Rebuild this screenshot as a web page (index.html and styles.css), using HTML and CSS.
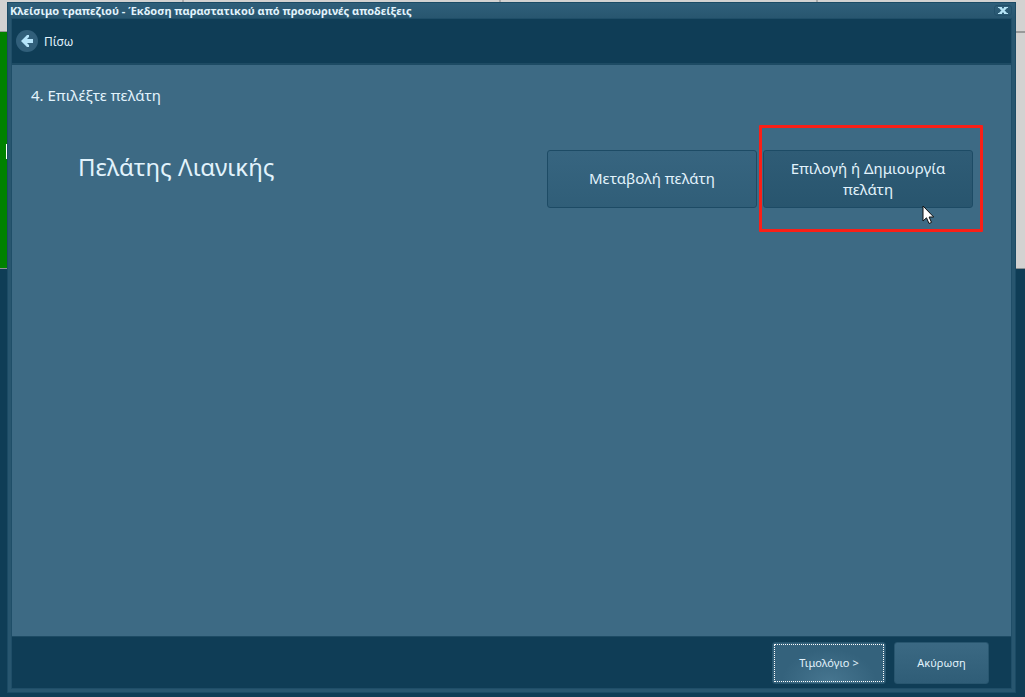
FILE: index.html
```html
<!DOCTYPE html>
<html lang="el">
<head>
<meta charset="utf-8">
<title>Κλείσιμο τραπεζιού</title>
<link rel="stylesheet" href="styles.css">
</head>
<body>
<div class="desktop" aria-hidden="true">
  <div class="desktop-grid"><span></span><span></span><span></span><span></span></div>
  <div class="desktop-table"><i></i></div>
</div>
<main class="window">
  <header class="titlebar">
    <h1>Κλείσιμο τραπεζιού - Έκδοση παραστατικού από προσωρινές αποδείξεις</h1>
    <button class="close" aria-label="Κλείσιμο">
      <svg width="10" height="7" viewBox="0 0 10 7"><path d="M0 .5h4M6 .5h4M0 6.500h4M6 6.500h4" stroke="#b5e4f6"/><path d="M2 .5l6 6M8 .5l-6 6" stroke="#b5e4f6" stroke-width="2.400"/></svg>
    </button>
  </header>
  <div class="frame">
    <nav class="toolbar">
      <button class="back">
        <svg width="24" height="24" viewBox="0 0 24 24"><circle cx="12" cy="12" r="11" fill="#315f7a"/><path d="M6 12l6-6h2v2l-2 2h6v4h-6l2 2v2h-2z" fill="#b5e4fa"/></svg>
        <span>Πίσω</span>
      </button>
    </nav>
    <section class="content">
      <h2>4. Επιλέξτε πελάτη</h2>
      <div class="customer">
        <p class="customer-name">Πελάτης Λιανικής</p>
        <div class="choices">
          <button class="choice">Μεταβολή πελάτη</button>
          <div class="highlighted">
            <button class="choice active">Επιλογή ή Δημιουργία πελάτη</button>
            <svg class="cursor" width="13" height="20" viewBox="0 0 13 20"><path d="M1 1v15l3.500-3.200L7 18.500l2.500-1.100-2.400-5.400h4.600z" fill="#fff" stroke="#111" stroke-width="1"/></svg>
          </div>
        </div>
      </div>
    </section>
    <footer class="actions">
      <button class="action focused">Τιμολόγιο &gt;</button>
      <button class="action">Ακύρωση</button>
    </footer>
  </div>
</main>
</body>
</html>
```
FILE: styles.css
```css
* { box-sizing: border-box; }
body {
  margin: 0;
  height: 100vh;
  display: flex;
  position: relative;
  overflow: hidden;
  background: #0f3d56;
  color: #e2f3fc;
  font-family: "Noto Sans", "Open Sans", sans-serif;
}
h1, h2, p { margin: 0; font-weight: 400; }
button {
  font: inherit;
  color: inherit;
  border: 0;
  padding: 0;
  background: none;
}
svg { display: block; }

.desktop {
  position: absolute;
  inset: 0 0 auto 0;
  height: 269px;
  background: #d3d2d1;
  border-bottom: 1px solid #8b9193;
}
.desktop-grid {
  display: grid;
  grid-template-columns: 184px 317px 317px 1fr;
  height: 33px;
  border-bottom: 2px solid #999;
}
.desktop-grid span { border-right: 2px solid #aaa; }
.desktop-grid span:last-child { border: 0; }
.desktop-table {
  position: absolute;
  top: 32px;
  left: 0;
  bottom: 0;
  width: 7px;
  padding-top: 112px;
  background: #008200;
}
.desktop-table i {
  display: block;
  width: 1px;
  height: 15px;
  margin-left: 6px;
  background: #fff;
}

.window {
  position: relative;
  flex: 1;
  display: flex;
  flex-direction: column;
  margin: 2px 9px 4px 7px;
  border: 1px solid #1b4b65;
  background: #28566f;
}
.titlebar {
  display: flex;
  align-items: center;
  justify-content: space-between;
  height: 15px;
  padding: 0 3px 0 2px;
  background: linear-gradient(#2f5f7a, #28566f);
}
.titlebar h1 {
  font-size: 11px;
  line-height: 15px;
  font-weight: 700;
  white-space: nowrap;
}
.close {
  display: grid;
  place-items: center;
  width: 18px;
  height: 11px;
  border: 1px solid #22516b;
  border-radius: 3px;
}
.frame {
  flex: 1;
  display: flex;
  flex-direction: column;
  margin: 0 3px 3px;
  border: 1px solid #1f4e68;
}
.toolbar {
  display: flex;
  align-items: center;
  height: 46px;
  padding: 0 3px;
  background: #0f3d56;
  border-bottom: 2px solid #1d4b64;
}
.back {
  display: flex;
  align-items: center;
  gap: 5px;
  font-size: 12px;
}
.content {
  flex: 1;
  padding: 18px 28px 0 19px;
  background: #3d6a84;
}
.content h2 { font-size: 15px; line-height: 24px; }
.customer {
  display: flex;
  justify-content: space-between;
  padding: 18px 0 0 47px;
}
.customer-name {
  padding-top: 26px;
  font-size: 24px;
  line-height: 32px;
}
.choices { display: flex; align-items: center; gap: 2px; }
.choice {
  width: 210px;
  height: 58px;
  padding: 0 16px;
  border: 1px solid #1d4b65;
  border-radius: 3px;
  background: linear-gradient(#376580, #305e78);
  font-size: 15px;
  line-height: 21px;
}
.choice.active { background: linear-gradient(#2f5c76, #28556e); }
.highlighted {
  position: relative;
  padding: 22px 7px 21px 1px;
  border: 3px solid #fa1f17;
  border-radius: 1px;
}
.cursor { position: absolute; right: 45px; bottom: 4px; }
.actions {
  display: flex;
  justify-content: flex-end;
  align-items: center;
  gap: 8px;
  height: 52px;
  padding: 0 22px;
  background: #0f3d56;
  border-top: 1px solid #1d4b64;
}
.action {
  width: 95px;
  height: 42px;
  border: 1px solid #28566f;
  border-radius: 3px;
  background: linear-gradient(#3b6983, #2f5d77);
  font-size: 11px;
}
.action.focused {
  width: 114px;
  outline: 1px dotted #fff;
  outline-offset: -3px;
  background: radial-gradient(ellipse at bottom, #477690, #34627c 60%);
}
```
